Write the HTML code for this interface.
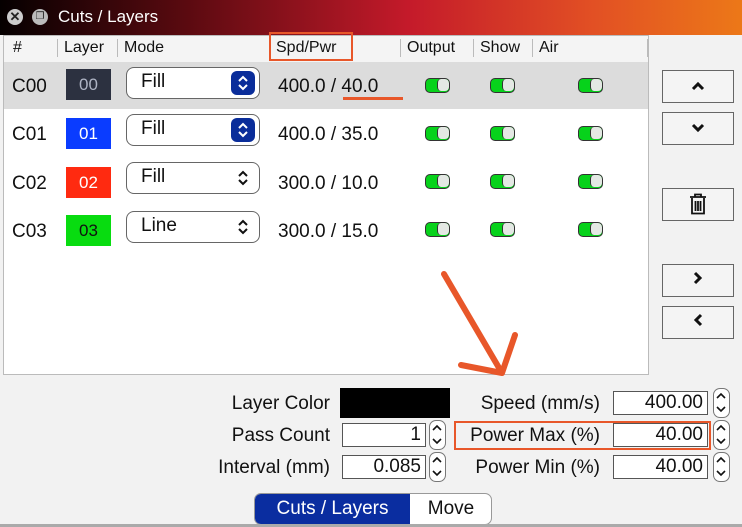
<!DOCTYPE html>
<html><head><style>
*{box-sizing:border-box;margin:0;padding:0}
body{width:742px;height:527px;overflow:hidden;background:#f2f2f2;font-family:"Liberation Sans",sans-serif;position:relative;color:#111}
.a{position:absolute}
.tb{left:0;top:0;width:742px;height:35px;background:linear-gradient(90deg,#050000 0%,#5a0a10 25%,#c41a2a 55%,#e25024 80%,#ec7818 100%)}
.hdr{font-size:16px;top:39px}
.sep{width:1px;height:18px;background:#bbb;top:39px}
.cell{font-size:19px}
.sw{width:45px;height:31px;font-size:17px;text-align:center;line-height:31px}
.sel{width:134px;height:32px;border:1.5px solid #666;border-radius:8px;background:#fff;font-size:19px;padding-left:14px;line-height:28px}
.sel .k{position:absolute;right:4px;top:3px;width:24px;height:24px;border-radius:6px;background:#0a2d9a}
.sel .k svg,.sel .k2 svg{display:block}
.sel .k2{position:absolute;right:4px;top:3px;width:24px;height:24px}
.tg{width:25px;height:15px;border:1.5px solid #333;border-radius:5px;background:#07d21b;overflow:hidden}
.tg i{position:absolute;right:0;top:0;width:12px;height:12px;background:#e4e8e4;border-left:1.5px solid #333;border-radius:4px}
.btn{left:662px;width:72px;height:33px;border:1.5px solid #666;background:#f4f4f4;text-align:center;font-size:17px;font-weight:bold;line-height:30px}
.lbl{font-size:19px;text-align:right}
.in{height:24px;border:1.5px solid #555;background:#fff;font-size:19px;text-align:right;padding-right:4px;line-height:21px}
.sp{width:17px;height:30px;border:1.5px solid #777;border-radius:7px;background:#fff}
.sp svg{display:block}
</style></head><body>
<div class="a tb"></div>
<div class="a" style="left:7px;top:9px;width:16px;height:16px;border-radius:50%;background:#ccc;color:#222;font-size:13px;font-weight:bold;text-align:center;line-height:16px">✕</div>
<div class="a" style="left:32px;top:9px;width:16px;height:16px;border-radius:50%;background:#bbb;color:#222;font-size:10px;text-align:center;line-height:16px">❐</div>
<div class="a" style="left:58px;top:7px;color:#fff;font-size:17px">Cuts / Layers</div>

<div class="a" style="left:3px;top:35px;width:646px;height:340px;background:#fff;border:1px solid #bbb"></div>
<div class="a" style="left:4px;top:36px;width:644px;height:26px;background:#f4f4f4"></div>
<div class="a hdr" style="left:13px">#</div>
<div class="a sep" style="left:57px"></div>
<div class="a hdr" style="left:64px">Layer</div>
<div class="a sep" style="left:117px"></div>
<div class="a hdr" style="left:124px">Mode</div>
<div class="a hdr" style="left:276px">Spd/Pwr</div>
<div class="a" style="left:269px;top:32px;width:84px;height:29px;border:2.5px solid #e8572a"></div>
<div class="a sep" style="left:400px"></div>
<div class="a hdr" style="left:407px">Output</div>
<div class="a sep" style="left:473px"></div>
<div class="a hdr" style="left:480px">Show</div>
<div class="a sep" style="left:532px"></div>
<div class="a hdr" style="left:539px">Air</div>
<div class="a sep" style="left:647px"></div>

<div class="a" style="left:4px;top:62px;width:644px;height:47px;background:#dcdcdc"></div>

<div class="a cell" style="left:12px;top:76px">C00</div>
<div class="a sw" style="left:66px;top:69px;background:#2c3140;color:#aeb4c4">00</div>
<div class="a sel" style="left:126px;top:67px">Fill<span class="k"><svg width="24" height="24"><path d="M8 10L12 6L16 10M8 14L12 18L16 14" stroke="#fff" stroke-width="2" fill="none"/></svg></span></div>
<div class="a cell" style="left:278px;top:76px">400.0 / 40.0</div>
<div class="a" style="left:343px;top:97px;width:60px;height:3px;background:#e8572a"></div>

<div class="a cell" style="left:12px;top:124px">C01</div>
<div class="a sw" style="left:66px;top:118px;background:#0a3cff;color:#fff">01</div>
<div class="a sel" style="left:126px;top:114px">Fill<span class="k"><svg width="24" height="24"><path d="M8 10L12 6L16 10M8 14L12 18L16 14" stroke="#fff" stroke-width="2" fill="none"/></svg></span></div>
<div class="a cell" style="left:278px;top:124px">400.0 / 35.0</div>

<div class="a cell" style="left:12px;top:173px">C02</div>
<div class="a sw" style="left:66px;top:167px;background:#ff2a10;color:#fff">02</div>
<div class="a sel" style="left:126px;top:162px">Fill<span class="k2"><svg width="24" height="24"><path d="M8 10L12 6L16 10M8 14L12 18L16 14" stroke="#111" stroke-width="2" fill="none"/></svg></span></div>
<div class="a cell" style="left:278px;top:173px">300.0 / 10.0</div>

<div class="a cell" style="left:12px;top:221px">C03</div>
<div class="a sw" style="left:66px;top:215px;background:#08dc10;color:#111">03</div>
<div class="a sel" style="left:126px;top:211px">Line<span class="k2"><svg width="24" height="24"><path d="M8 10L12 6L16 10M8 14L12 18L16 14" stroke="#111" stroke-width="2" fill="none"/></svg></span></div>
<div class="a cell" style="left:278px;top:221px">300.0 / 15.0</div>

<!-- toggles -->
<div class="a tg" style="left:425px;top:78px"><i></i></div><div class="a tg" style="left:490px;top:78px"><i></i></div><div class="a tg" style="left:578px;top:78px"><i></i></div>
<div class="a tg" style="left:425px;top:126px"><i></i></div><div class="a tg" style="left:490px;top:126px"><i></i></div><div class="a tg" style="left:578px;top:126px"><i></i></div>
<div class="a tg" style="left:425px;top:174px"><i></i></div><div class="a tg" style="left:490px;top:174px"><i></i></div><div class="a tg" style="left:578px;top:174px"><i></i></div>
<div class="a tg" style="left:425px;top:222px"><i></i></div><div class="a tg" style="left:490px;top:222px"><i></i></div><div class="a tg" style="left:578px;top:222px"><i></i></div>

<!-- right buttons -->
<div class="a btn" style="top:70px"><svg width="14" height="10" viewBox="0 0 14 10"><path d="M2 8L7 3L12 8" stroke="#111" stroke-width="3" fill="none"/></svg></div>
<div class="a btn" style="top:112px"><svg width="14" height="10" viewBox="0 0 14 10"><path d="M2 2L7 7L12 2" stroke="#111" stroke-width="3" fill="none"/></svg></div>
<div class="a btn" style="top:188px"><svg width="18" height="22" viewBox="0 0 18 22" style="margin-top:4px"><path d="M1 4H17M6 4V1.5H12V4M3 5V20.5H15V5M6.5 8V18M9 8V18M11.5 8V18" stroke="#111" stroke-width="1.8" fill="none"/></svg></div>
<div class="a btn" style="top:264px"><svg width="10" height="14" viewBox="0 0 10 14"><path d="M2 2L7 7L2 12" stroke="#111" stroke-width="3" fill="none"/></svg></div>
<div class="a btn" style="top:306px"><svg width="10" height="14" viewBox="0 0 10 14"><path d="M8 2L3 7L8 12" stroke="#111" stroke-width="3" fill="none"/></svg></div>

<!-- arrow -->
<svg class="a" style="left:0;top:0" width="742" height="527"><path d="M444 274L502 373M461 365L502 373L515 335" stroke="#e8572a" stroke-width="6" fill="none" stroke-linecap="round" stroke-linejoin="round"/></svg>

<!-- bottom form -->
<div class="a lbl" style="left:190px;top:393px;width:140px">Layer Color</div>
<div class="a" style="left:340px;top:388px;width:110px;height:30px;background:#000"></div>
<div class="a lbl" style="left:190px;top:425px;width:140px">Pass Count</div>
<div class="a in" style="left:342px;top:423px;width:84px">1</div>
<div class="a sp" style="left:429px;top:420px"><svg width="14" height="27"><path d="M3 9L7 5L11 9M3 18L7 22L11 18" stroke="#111" stroke-width="1.6" fill="none"/></svg></div>
<div class="a lbl" style="left:190px;top:457px;width:140px">Interval (mm)</div>
<div class="a in" style="left:342px;top:455px;width:84px">0.085</div>
<div class="a sp" style="left:429px;top:452px"><svg width="14" height="27"><path d="M3 9L7 5L11 9M3 18L7 22L11 18" stroke="#111" stroke-width="1.6" fill="none"/></svg></div>

<div class="a lbl" style="left:440px;top:393px;width:160px">Speed (mm/s)</div>
<div class="a in" style="left:613px;top:391px;width:95px">400.00</div>
<div class="a sp" style="left:713px;top:388px"><svg width="14" height="27"><path d="M3 9L7 5L11 9M3 18L7 22L11 18" stroke="#111" stroke-width="1.6" fill="none"/></svg></div>
<div class="a lbl" style="left:440px;top:425px;width:160px">Power Max (%)</div>
<div class="a in" style="left:613px;top:423px;width:95px">40.00</div>
<div class="a" style="left:454px;top:421px;width:257px;height:29px;border:2.5px solid #e8572a"></div>
<div class="a sp" style="left:713px;top:420px"><svg width="14" height="27"><path d="M3 9L7 5L11 9M3 18L7 22L11 18" stroke="#111" stroke-width="1.6" fill="none"/></svg></div>
<div class="a lbl" style="left:440px;top:457px;width:160px">Power Min (%)</div>
<div class="a in" style="left:613px;top:455px;width:95px">40.00</div>
<div class="a sp" style="left:713px;top:452px"><svg width="14" height="27"><path d="M3 9L7 5L11 9M3 18L7 22L11 18" stroke="#111" stroke-width="1.6" fill="none"/></svg></div>

<div class="a" style="left:254px;top:493px;width:238px;height:32px;border:1.5px solid #999;border-radius:7px;background:#fff;overflow:hidden">
<div class="a" style="left:0;top:0;width:155px;height:32px;background:#0a2da0;color:#fff;font-size:19px;text-align:center;line-height:30px">Cuts / Layers</div>
<div class="a" style="left:155px;top:0;width:82px;font-size:19px;text-align:center;line-height:30px">Move</div>
</div>
<div class="a" style="left:0;top:524px;width:742px;height:3px;background:#aaa"></div>
</body></html>
